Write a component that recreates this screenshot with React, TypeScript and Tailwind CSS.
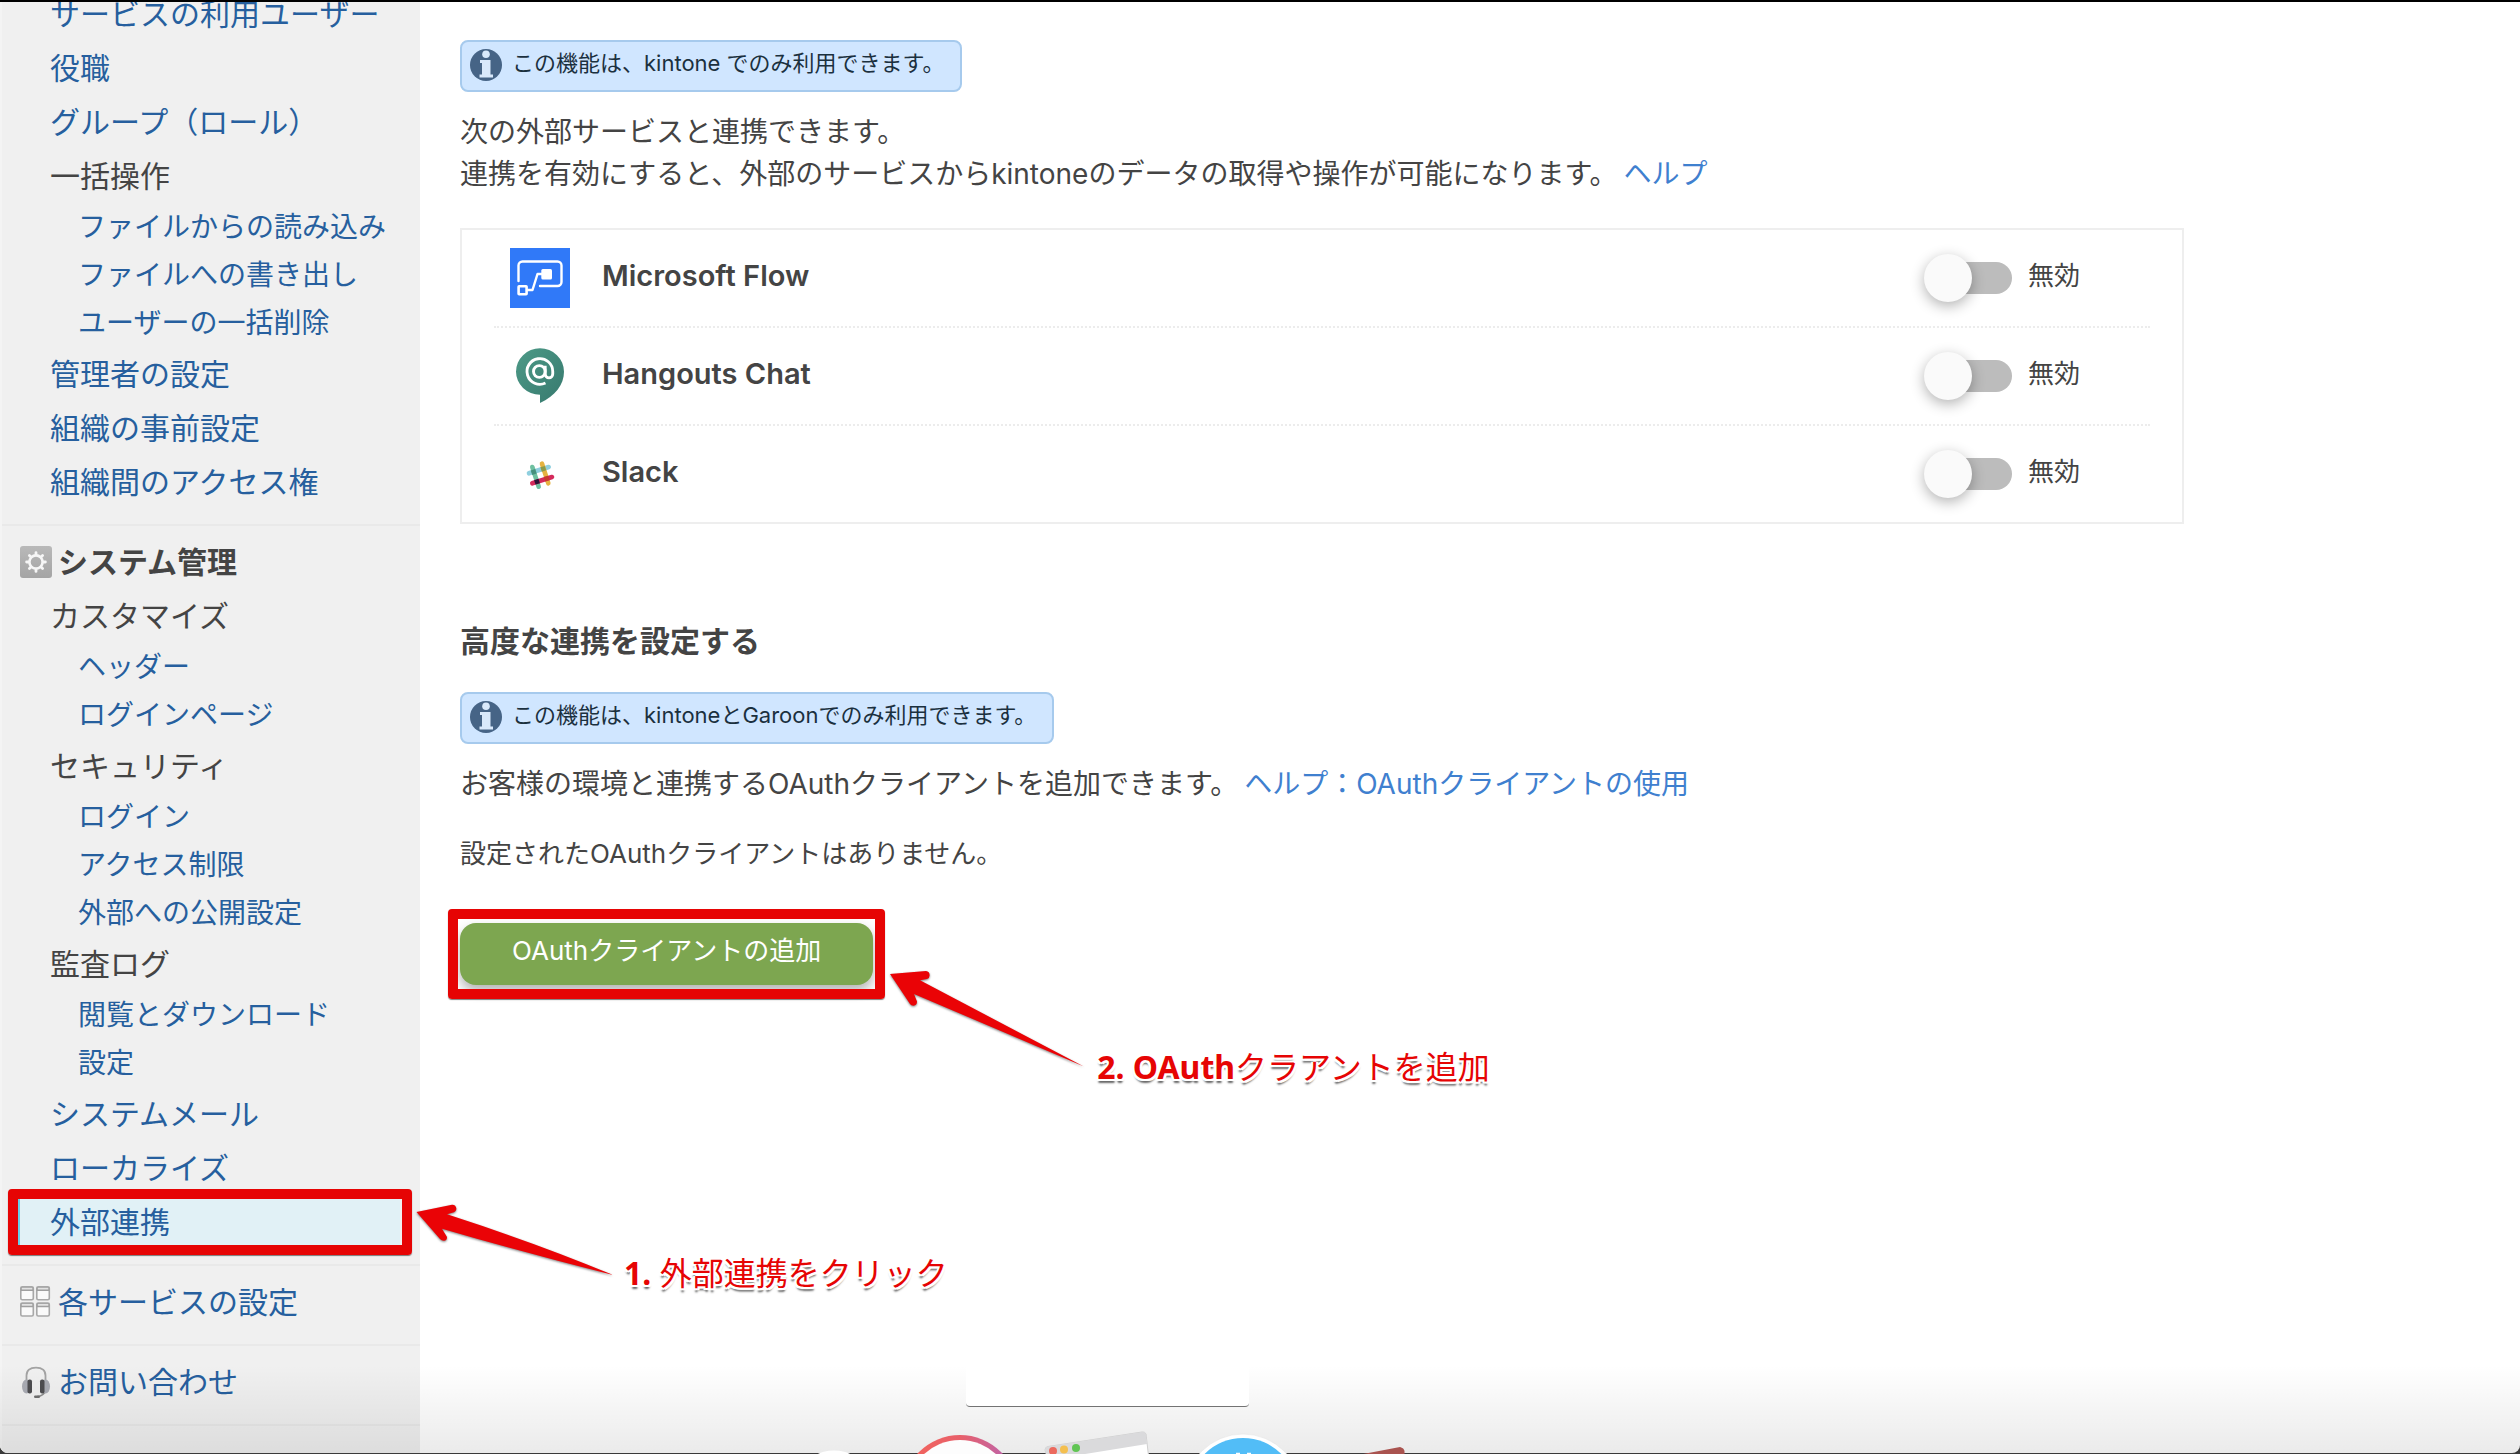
import React from "react";

type NavItem = {
  label: string;
  link?: boolean;
  active?: boolean;
  children?: string[];
};

const userItems: NavItem[] = [
  { label: "サービスの利用ユーザー", link: true },
  { label: "役職", link: true },
  { label: "グループ（ロール）", link: true },
  {
    label: "一括操作",
    children: [
      "ファイルからの読み込み",
      "ファイルへの書き出し",
      "ユーザーの一括削除",
    ],
  },
  { label: "管理者の設定", link: true },
  { label: "組織の事前設定", link: true },
  { label: "組織間のアクセス権", link: true },
];

const systemItems: NavItem[] = [
  { label: "カスタマイズ", children: ["ヘッダー", "ログインページ"] },
  {
    label: "セキュリティ",
    children: ["ログイン", "アクセス制限", "外部への公開設定"],
  },
  { label: "監査ログ", children: ["閲覧とダウンロード", "設定"] },
  { label: "システムメール", link: true },
  { label: "ローカライズ", link: true },
  { label: "外部連携", link: true, active: true },
];

function GearIcon() {
  return (
    <svg viewBox="0 0 32 32" className="h-8 w-8 shrink-0" aria-hidden="true">
      <defs>
        <linearGradient id="gear-bg" x1="0" y1="0" x2="0" y2="1">
          <stop offset="0" stopColor="#b9b9b9" />
          <stop offset="1" stopColor="#a4a4a4" />
        </linearGradient>
      </defs>
      <rect width="32" height="32" rx="3" fill="url(#gear-bg)" />
      <circle cx="16" cy="16" r="6.6" fill="none" stroke="#f6f6f6" strokeWidth="2.6" />
      <g stroke="#f6f6f6" strokeWidth="2.8" strokeLinecap="round">
        <path d="M16 6.6v2M16 23.4v2M6.6 16h2M23.4 16h2" />
        <path d="M9.4 9.4l1.4 1.4M21.2 21.2l1.4 1.4M22.6 9.4l-1.4 1.4M10.8 21.2l-1.4 1.4" />
      </g>
    </svg>
  );
}

function ServicesIcon() {
  return (
    <svg viewBox="0 0 32 32" className="h-8 w-8 shrink-0" aria-hidden="true">
      {[
        [0.8, 0.8],
        [16.8, 0.8],
        [0.8, 17],
        [16.8, 17],
      ].map(([x, y]) => (
        <g key={`${x}-${y}`}>
          <rect x={x} y={y} width="12.5" height="13" rx="1.5" fill="#fafafa" stroke="#a8a8a8" strokeWidth="1.6" />
          <path d={`M${x} ${y + 2.2}h12.5`} stroke="#9f9f9f" strokeWidth="4" />
          <path d={`M${x + 1} ${y + 1.8}h10.5`} stroke="#e2e2e2" strokeWidth="1.8" />
        </g>
      ))}
    </svg>
  );
}

function HeadsetIcon() {
  return (
    <svg viewBox="0 0 32 32" className="h-8 w-8 shrink-0" aria-hidden="true">
      <path
        d="M6.5 17V9.5Q6.5 1.6 16 1.6T25.5 9.5V17"
        fill="none"
        stroke="#a3a3a3"
        strokeWidth="1.8"
      />
      <path d="M26 24q-2 6-9 6.5" fill="none" stroke="#8f8f8f" strokeWidth="1.6" />
      <rect x="14" y="29.5" width="6" height="2.5" rx="1.2" fill="#6f6f6f" />
      <ellipse cx="6.5" cy="20.5" rx="4.5" ry="7" fill="#a9abb3" />
      <ellipse cx="25.5" cy="20.5" rx="4.5" ry="7" fill="#a9abb3" />
      <rect x="7.5" y="13.5" width="4.5" height="14" rx="2" fill="#4d4d50" />
      <rect x="20" y="13.5" width="4.5" height="14" rx="2" fill="#4d4d50" />
    </svg>
  );
}

function InfoIcon() {
  return (
    <svg viewBox="0 0 32 32" className="h-8 w-8 shrink-0" aria-hidden="true">
      <circle cx="16" cy="16" r="16" fill="#466486" />
      <circle cx="16" cy="5.2" r="3.8" fill="#d9e9fb" />
      <path d="M10 11h10.500v14.500h2.500v3H9.500v-3H12v-11.500h-2z" fill="#d9e9fb" />
    </svg>
  );
}

function FlowIcon() {
  return (
    <svg viewBox="0 0 60 60" className="h-15 w-15 shrink-0" aria-hidden="true">
      <rect width="60" height="60" fill="#3079f8" />
      <g fill="none" stroke="#fff" strokeWidth="2.4" strokeLinecap="round">
        <path d="M8.5 33V17.5a4 4 0 0 1 4-4H47.5a4 4 0 0 1 4 4V34a4 4 0 0 1-4 4H30" />
        <path d="M18 42h4.5L27.5 26H32" strokeLinejoin="round" />
        <rect x="8.6" y="38.3" width="8" height="8" rx="0.5" strokeWidth="2.6" />
      </g>
      <rect x="31.3" y="21" width="10.7" height="10.5" rx="1.5" fill="#fff" />
    </svg>
  );
}

function HangoutsIcon() {
  return (
    <svg viewBox="0 0 60 60" className="h-15 w-15 shrink-0" aria-hidden="true">
      <defs>
        <linearGradient id="hangouts-bg" x1="0" y1="0" x2="1" y2="1">
          <stop offset="0" stopColor="#4d9a87" />
          <stop offset="1" stopColor="#37796e" />
        </linearGradient>
      </defs>
      <path
        d="M30 2.3a24 23.5 0 0 1 24 23.5C54 39 45 50 30 57v-8.3A24 23 0 0 1 6 25.8 24 23.5 0 0 1 30 2.3z"
        fill="url(#hangouts-bg)"
      />
      <g
        transform="translate(14.4 9.9) scale(1.3)"
        fill="none"
        stroke="#fff"
        strokeWidth="2.2"
      >
        <circle cx="11.5" cy="12" r="4.5" />
        <path d="M16 7.5v6.5a2.8 2.8 0 0 0 5.8 0v-2a9.9 9.9 0 1 0-5.6 8.9" />
      </g>
    </svg>
  );
}

function SlackIcon() {
  return (
    <svg viewBox="0 0 60 60" className="h-15 w-15 shrink-0" aria-hidden="true">
      <g strokeWidth="4.6" strokeLinecap="round">
        <path d="M19 29.3L38.7 23" stroke="#8fcfdf" />
        <path d="M22.3 23L28.7 42.7" stroke="#6fc0a0" />
        <path d="M32 19.7L38.3 39.3" stroke="#e5b340" />
        <path d="M22.3 39.3L42 33" stroke="#d42a5b" />
      </g>
      <rect x="21.4" y="25.7" width="4.6" height="4.6" fill="#468f7c" transform="rotate(-18 23.7 28)" />
      <rect x="31" y="22.5" width="4.6" height="4.6" fill="#8a9b4c" transform="rotate(-18 33.3 24.8)" />
      <rect x="24.7" y="35.4" width="4.6" height="4.6" fill="#2c1236" transform="rotate(-18 27 37.7)" />
      <rect x="34.4" y="32.3" width="4.6" height="4.6" fill="#c63a2d" transform="rotate(-18 36.7 34.6)" />
    </svg>
  );
}

const services = [
  { id: "flow", name: "Microsoft Flow", icon: <FlowIcon /> },
  { id: "hangouts", name: "Hangouts Chat", icon: <HangoutsIcon /> },
  { id: "slack", name: "Slack", icon: <SlackIcon /> },
];

function NavList({ items }: { items: NavItem[] }) {
  return (
    <ul>
      {items.map((item) => (
        <li key={item.label}>
          {item.active ? (
            <div className="relative mr-5 ml-4 border-l-2 border-[#66cfe8] bg-[#e1f1f6] pl-7.5">
              <a href="#" aria-current="page" className="block text-[#265f9e]">
                {item.label}
              </a>
              {/* Step 1 */}
              <Highlight className="-inset-y-1.5" />
              <Callout
                step="1. "
                text="外部連携をクリック"
                arrow={<FirstArrow />}
                className="left-full top-2 ml-4"
              />
            </div>
          ) : item.link ? (
            <a href="#" className="block pl-12 text-[#265f9e]">
              {item.label}
            </a>
          ) : (
            <span className="block pl-12">{item.label}</span>
          )}
          {item.children && (
            <ul className="text-[28px] leading-12">
              {item.children.map((child) => (
                <li key={child}>
                  <a href="#" className="block pl-19 text-[#265f9e]">
                    {child}
                  </a>
                </li>
              ))}
            </ul>
          )}
        </li>
      ))}
    </ul>
  );
}

function Highlight({ className }: { className: string }) {
  return (
    <div
      className={`pointer-events-none absolute -inset-x-3 rounded border-10 border-[#e60404] shadow-[0_1px_1px_rgba(0,0,0,0.5)] ${className}`}
    />
  );
}

function FirstArrow() {
  return (
    <svg
      viewBox="417 1204 196 74"
      className="h-[74px] w-[196px] shrink-0 drop-shadow-[0_1px_1px_rgba(0,0,0,0.5)]"
      aria-hidden="true"
    >
      <path
        d="M417.5 1213L453 1205.7Q457 1205.5 457.4 1210Q457 1212.5 455 1213.2L448 1215.3Q540 1245 613.5 1275.8Q530 1255 443 1229.7L448 1238Q448 1242 444.8 1241.8Q442.5 1241.8 441 1240Z"
        fill="#ea0306"
      />
    </svg>
  );
}

function SecondArrow() {
  return (
    <svg
      viewBox="888 970 196 102"
      className="h-[102px] w-[196px] shrink-0 drop-shadow-[0_1px_1px_rgba(0,0,0,0.5)]"
      aria-hidden="true"
    >
      <path
        d="M889 975L925 972Q928.8 972.5 928.6 976.5Q928.5 979.5 926 980L919 981.3L1082.8 1067.5Q1000 1032 913 995L916 1002.5Q916 1006.5 912.5 1006.7Q910 1006.7 909 1005Z"
        fill="#ea0306"
      />
    </svg>
  );
}

function Callout({
  step,
  text,
  arrow,
  className,
}: {
  step: string;
  text: string;
  arrow: React.ReactNode;
  className: string;
}) {
  return (
    <div className={`pointer-events-none absolute flex items-end gap-3 ${className}`}>
      {arrow}
      <p className="-mb-4 whitespace-nowrap font-['Noto_Sans','Noto_Sans_CJK_JP',sans-serif] text-[32px] leading-10 text-[#e60404] [text-shadow:2px_0_0_#fff,-2px_0_0_#fff,0_2px_0_#fff,0_-2px_0_#fff,2px_2px_0_#fff,-2px_2px_0_#fff,0_4px_2px_rgba(0,0,0,0.6)]">
        <span className="font-bold">{step}</span>
        <span>{text}</span>
      </p>
    </div>
  );
}

function Notice({ children }: { children: React.ReactNode }) {
  return (
    <div className="flex w-fit items-start gap-2.5 rounded-lg border-2 border-[#a6caed] bg-[#d0e6ff] px-2 pt-[7px] pb-[9px]">
      <InfoIcon />
      <p className="pr-2 text-[22px] leading-7 text-[#1b303e]">{children}</p>
    </div>
  );
}

function HelpLink({ children }: { children: React.ReactNode }) {
  return (
    <a href="#" className="ml-1.5 text-[#3f80cf]">
      {children}
    </a>
  );
}

function ServiceRow({
  id,
  name,
  icon,
}: {
  id: string;
  name: string;
  icon: React.ReactNode;
}) {
  return (
    <li className="flex items-center gap-8 pr-17.5 pl-4">
      {icon}
      <h3 className="flex-1 pb-1 text-[29px] leading-[92px] font-semibold">{name}</h3>
      <label htmlFor={id} className="flex items-center gap-4">
        <input id={id} type="checkbox" role="switch" className="sr-only" />
        <span className="flex h-12 w-22 items-center pl-1">
          <span className="flex h-8 w-21 items-center rounded-full bg-[#bcbcbc]">
            <span className="-ml-1 h-12 w-12 rounded-full bg-[#fafafa] shadow-[0_4px_14px_rgba(0,0,0,0.3)]" />
          </span>
        </span>
        <span className="pb-1 text-[26px] leading-9">無効</span>
      </label>
    </li>
  );
}

/* Tops of the dock icons peeking over the bottom edge */
function Dock() {
  return (
    <svg
      viewBox="800 1414 920 40"
      className="pointer-events-none absolute bottom-0 left-1/2 h-10 w-[920px] -translate-x-1/2"
      aria-hidden="true"
    >
      <defs>
        <linearGradient id="music-ring" x1="0" y1="0" x2="1" y2="0">
          <stop offset="0" stopColor="#f4645a" />
          <stop offset="0.5" stopColor="#e8606a" />
          <stop offset="1" stopColor="#b565b8" />
        </linearGradient>
      </defs>
      <ellipse cx="834" cy="1468" rx="27" ry="17.5" fill="#fff" />
      <circle cx="960" cy="1493" r="58" fill="url(#music-ring)" />
      <circle cx="960" cy="1493" r="53" fill="#fdfdfd" />
      <path d="M1048 1460L1045 1450Q1045 1447 1048 1446.5L1142 1432Q1145 1431.5 1146 1434L1149 1460Z" fill="#fff" stroke="#cfcfcf" />
      <path d="M1048 1460L1045 1450Q1045 1447 1048 1446.5L1142 1432Q1145 1431.5 1146 1434L1147 1444Z" fill="#dadadc" />
      <circle cx="1053" cy="1451" r="4" fill="#ec6a5e" />
      <circle cx="1064" cy="1449.5" r="4" fill="#f4bf4f" />
      <circle cx="1076" cy="1448" r="4" fill="#61c554" />
      <circle cx="1243" cy="1492" r="58" fill="#fff" stroke="#e0e0e0" strokeWidth="0.5" />
      <circle cx="1243" cy="1492" r="54" fill="#52bdf7" />
      <path d="M1236 1453.5h4M1247 1453.5h4" stroke="#fff" strokeWidth="1.5" />
      <path d="M1358 1455L1400 1447Q1404 1448 1404.5 1451V1455Z" fill="#a9534f" />
    </svg>
  );
}

export default function App() {
  return (
    <div
      lang="ja"
      className="relative flex min-h-screen flex-col overflow-hidden border-t-2 border-black bg-[#3a3a3a] pb-px font-[Inter,'Noto_Sans_CJK_JP',sans-serif] text-[#444]"
    >
      <div className="relative flex flex-1 overflow-hidden rounded-b-lg bg-white">
        {/* Sidebar */}
        <nav className="relative w-105 shrink-0 border-l-2 border-[#f4f4f4] bg-[#f0f0f0] text-[30px] leading-[54px]">
          <section className="-mt-[15px] border-b-2 border-[#e9e9e9] pb-[15px]">
            <NavList items={userItems} />
          </section>

          <section className="border-b-2 border-[#e9e9e9] pt-[9px] pb-[15px]">
            <h2 className="flex items-center gap-1.5 pl-4.5 font-bold">
              <GearIcon />
              システム管理
            </h2>
            <NavList items={systemItems} />
          </section>

          <section className="border-b-2 border-[#e9e9e9] pt-[9px] pb-[15px]">
            <a href="#" className="flex items-center gap-1.5 pl-4.5 text-[#265f9e]">
              <ServicesIcon />
              各サービスの設定
            </a>
          </section>

          <section className="border-b-2 border-[#e9e9e9] pt-[9px] pb-[15px]">
            <a href="#" className="flex items-center gap-1.5 pl-4.5 text-[#265f9e]">
              <HeadsetIcon />
              お問い合わせ
            </a>
          </section>
        </nav>

        {/* Content */}
        <main className="flex-1 pt-[38px] pr-84 pl-10">
          <Notice>この機能は、kintone でのみ利用できます。</Notice>

          <p className="mt-[19px] text-[28px] leading-[42px]">
            次の外部サービスと連携できます。
            <br />
            連携を有効にすると、外部のサービスからkintoneのデータの取得や操作が可能になります。
            <HelpLink>ヘルプ</HelpLink>
          </p>

          <ul className="mt-[33px] divide-y-2 divide-dotted divide-[#ececec] border-2 border-[#eeeeee] px-8">
            {services.map((service) => (
              <ServiceRow key={service.id} {...service} />
            ))}
          </ul>

          <h2 className="mt-24 mb-7.5 text-[30px] leading-[42px] font-bold">
            高度な連携を設定する
          </h2>
          <Notice>この機能は、kintoneとGaroonでのみ利用できます。</Notice>

          <p className="mt-[19px] text-[28px] leading-[42px]">
            お客様の環境と連携するOAuthクライアントを追加できます。
            <HelpLink>ヘルプ：OAuthクライアントの使用</HelpLink>
          </p>
          <p className="mt-7 text-[26px] leading-[42px]">
            設定されたOAuthクライアントはありません。
          </p>

          <div className="relative mt-12 w-fit">
            <button
              type="button"
              className="block rounded-2xl bg-[#7da650] px-13 pt-2 pb-3.5 text-[26px] leading-10 text-white shadow-[0_6px_12px_rgba(0,0,0,0.3)]"
            >
              OAuthクライアントの追加
            </button>
            {/* Step 2 */}
            <Highlight className="-inset-y-3.5" />
            <Callout
              step="2. OAuth"
              text="クラアントを追加"
              arrow={<SecondArrow />}
              className="left-full top-11.5 ml-4"
            />
          </div>
        </main>

        {/* Shade above the dock, with the empty tooltip left white */}
        <div className="pointer-events-none absolute inset-x-0 bottom-0 h-22 bg-linear-to-b from-transparent to-black/8" />
        <div className="pointer-events-none absolute bottom-11.5 left-[966px] h-14 w-[283px] rounded-b border-b border-neutral-500 bg-white" />
      </div>
      <Dock />
    </div>
  );
}
